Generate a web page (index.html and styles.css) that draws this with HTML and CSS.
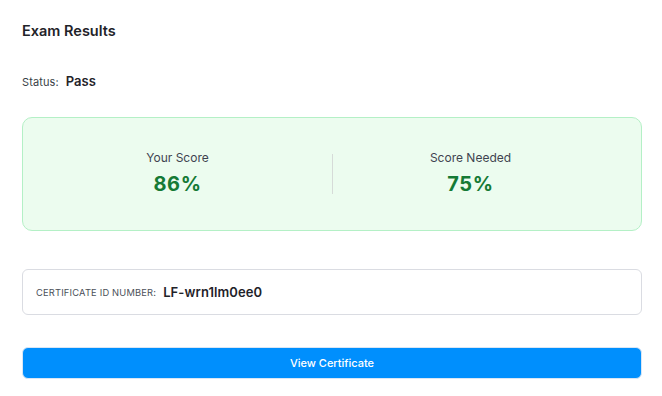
FILE: index.html
```html
<!DOCTYPE html>
<html lang="en">
<head>
    <meta charset="UTF-8">
    <meta name="viewport" content="width=device-width, initial-scale=1.0">
    <title>Exam Results</title>
    <link rel="stylesheet" href="styles.css">
</head>
<body>
    <div class="container">
        <h1 class="title">Exam Results</h1>
        <div class="status">
            <span class="status-label">Status:</span>
            <span class="status-value">Pass</span>
        </div>
        <div class="score-card">
            <div class="score-col">
                <div class="score-label">Your Score</div>
                <div class="score-value">86%</div>
            </div>
            <div class="divider"></div>
            <div class="score-col">
                <div class="score-label">Score Needed</div>
                <div class="score-value">75%</div>
            </div>
        </div>
        <div class="cert-box">
            <span class="cert-label">Certificate ID Number:</span>
            <span class="cert-id">LF-wrn1lm0ee0</span>
        </div>
        <button class="view-button">View Certificate</button>
    </div>
</body>
</html>
```

FILE: styles.css
```css
body {
    margin: 0;
    font-family: Inter, "Noto Sans", sans-serif;
    background-color: #fff;
    color: #1f2329;
}
.container {
    padding: 22px 20px 0 22px;
}
.title {
    margin: 0;
    font-size: 14.5px;
    line-height: 18px;
    font-weight: 600;
    color: #1f2329;
}
.status {
    margin-top: 33px;
    display: flex;
    align-items: baseline;
    gap: 7px;
    line-height: 16px;
}
.status-label {
    font-size: 11px;
    color: #3a3f47;
    letter-spacing: 0.1px;
}
.status-value {
    font-size: 13px;
    font-weight: 600;
    color: #1f2329;
    letter-spacing: 0.1px;
}
.score-card {
    margin-top: 27px;
    height: 114px;
    box-sizing: border-box;
    display: grid;
    grid-template-columns: 309px 1px 1fr;
    align-items: center;
    padding-right: 33px;
    background-color: #ecfcef;
    border: 1px solid #b4f0c6;
    border-radius: 10px;
}
.score-col {
    text-align: center;
    padding-bottom: 3px;
}
.score-label {
    font-size: 12px;
    line-height: 15px;
    color: #3f4450;
}
.score-value {
    margin-top: 7px;
    font-size: 20px;
    line-height: 24px;
    font-weight: 700;
    letter-spacing: 0.6px;
    color: #157a35;
}
.divider {
    width: 1px;
    height: 40px;
    background-color: #d6dbd8;
}
.cert-box {
    margin-top: 38px;
    height: 46px;
    box-sizing: border-box;
    display: flex;
    align-items: center;
    gap: 7px;
    padding-left: 13px;
    border: 1px solid #dadce2;
    border-radius: 6px;
}
.cert-label {
    font-size: 9.3px;
    text-transform: uppercase;
    color: #4b5059;
    letter-spacing: 0.2px;
}
.cert-id {
    font-size: 13px;
    font-weight: 600;
    color: #1f2329;
    letter-spacing: 0.1px;
}
.view-button {
    margin-top: 32px;
    display: block;
    width: 100%;
    height: 32px;
    border: 1px solid #d9e6f5;
    border-radius: 6px;
    background-color: #008ffd;
    color: #fff;
    font-family: Inter, "Noto Sans", sans-serif;
    font-size: 11px;
    font-weight: 500;
    cursor: pointer;
}
```
